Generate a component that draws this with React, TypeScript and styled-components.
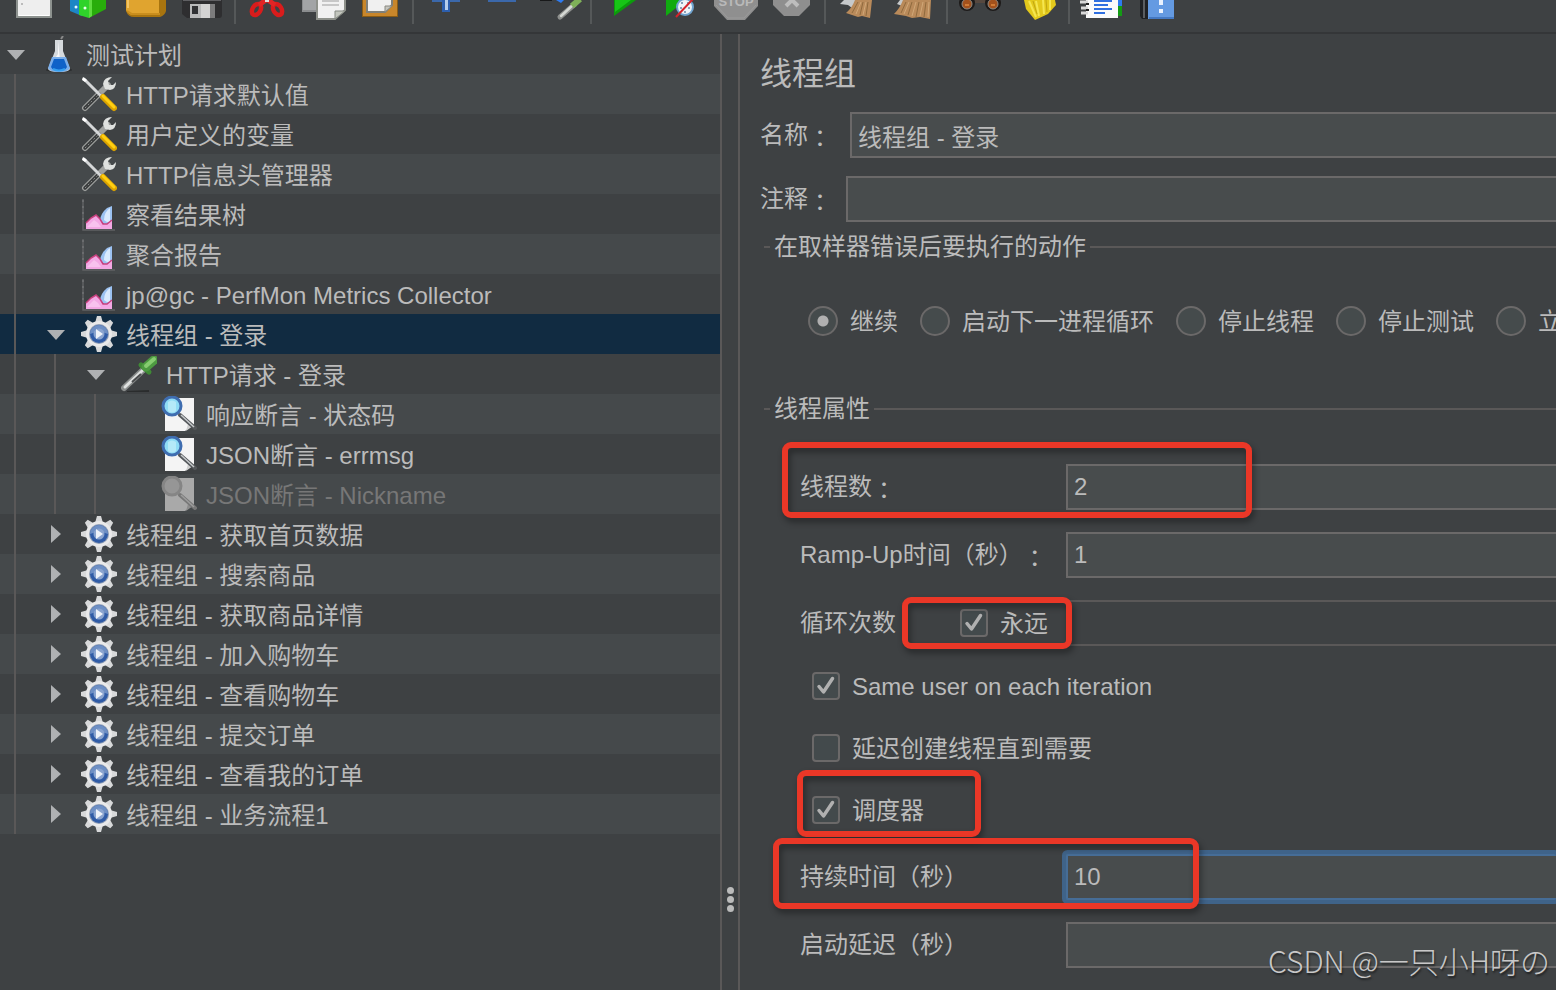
import React, { useId, useState } from "react";
import styled, { createGlobalStyle, css } from "styled-components";

const color = {
  base: "#3e4143",
  stripe: "#45494b",
  selected: "#112b41",
  field: "#484c4d",
  border: "#6b6969",
  line: "#5a5858",
  text: "#bbbbbb",
  muted: "#777777",
  focus: "#3f6389",
  mark: "#ea3727",
};

const GlobalStyle = createGlobalStyle`
  *, *::before, *::after { box-sizing: border-box; }
  body {
    margin: 0;
    overflow: hidden;
    background: ${color.base};
    color: ${color.text};
    font: 24px/30px "Liberation Sans", "Noto Sans CJK SC", sans-serif;
    text-spacing-trim: space-all;
  }
  button, input { font: inherit; color: inherit; margin: 0; }
`;

/* ---------- layout ---------- */

const Page = styled.div`
  height: 100vh;
  display: flex;
  flex-direction: column;
  overflow: hidden;
  position: relative;
`;

const Toolbar = styled.div`
  flex: none;
  display: flex;
  align-items: flex-start;
  height: 34px;
  padding-left: 6px;
  border-bottom: 2px solid #343638;
`;

const ToolButton = styled.button`
  flex: none;
  width: 56px;
  height: 24px;
  padding: 0;
  border: 0;
  background: none;
  svg { display: block; }
`;

const ToolSeparator = styled.span`
  flex: none;
  width: 2px;
  height: 24px;
  margin: 0 4px;
  background: #555859;
`;

const Workspace = styled.div`
  flex: 1;
  min-height: 0;
  display: flex;
`;

const TreePane = styled.nav`
  flex: 0 0 720px;
  min-width: 0;
`;

const Splitter = styled.div`
  flex: 0 0 20px;
  display: flex;
  flex-direction: column;
  align-items: center;
  justify-content: flex-end;
  gap: 2px;
  padding-bottom: 78px;
  border: solid ${color.line};
  border-width: 0 2px;
`;

const Dot = styled.span`
  width: 7px;
  height: 7px;
  border-radius: 50%;
  background: ${color.text};
`;

/* ---------- tree ---------- */

const TreeList = styled.ul`
  list-style: none;
  margin: 0;
  padding: 0;
`;

const TreeRow = styled.li<{ $selected?: boolean; $disabled?: boolean }>`
  display: flex;
  align-items: center;
  height: 40px;
  white-space: nowrap;
  &:nth-child(even) { background: ${color.stripe}; }
  ${(p) => p.$selected && css`&&:nth-child(n) { background: ${color.selected}; }`}
  ${(p) => p.$disabled && css`color: ${color.muted};`}
`;

const Indent = styled.span`
  flex: none;
  align-self: stretch;
  width: 40px;
  background: linear-gradient(${color.line}, ${color.line}) 14px 0 / 2px 100% no-repeat;
`;

const Toggle = styled.button`
  flex: none;
  display: grid;
  place-items: center;
  width: 32px;
  height: 40px;
  padding: 0;
  border: 0;
  background: none;
`;

const ToggleSpace = styled.span`
  flex: none;
  width: 32px;
`;

const TreeIcon = styled.svg`
  flex: none;
  width: 36px;
  height: 36px;
  margin: 0 9px;
`;

const TreeLabel = styled.span`
  padding-top: 3px;
`;

/* ---------- form ---------- */

const FormPane = styled.main`
  flex: 1;
  min-width: 0;
  overflow: hidden;
  padding: 20px 0 0 20px;
`;

const Title = styled.h1`
  margin: 0 0 18px;
  font-size: 32px;
  line-height: 40px;
  font-weight: 400;
`;

const HeadRow = styled.div<{ $gap: number }>`
  display: flex;
  align-items: center;
  gap: ${(p) => p.$gap}px;
  & + & { margin-top: 18px; }
`;

const Colon = styled.span`
  font-family: "Noto Sans CJK TC", sans-serif;
  line-height: 1;
  vertical-align: -4px;
`;

const TextField = styled.input<{ $active?: boolean }>`
  flex: 1;
  min-width: 0;
  height: 46px;
  padding: 0 6px;
  border: 2px solid ${color.border};
  border-right: 0;
  border-radius: 0;
  outline: 0;
  background: ${color.field};
  &:disabled { border-color: ${color.line}; background: ${color.base}; }
  ${(p) =>
    p.$active &&
    css`
      border-color: #466d97;
      border-radius: 2px;
      box-shadow: 0 0 0 4px ${color.focus};
    `}
`;

const Group = styled.section`
  margin-top: 10px;
  & + & { margin-top: 58px; }
`;

const GroupTitle = styled.h2`
  display: flex;
  align-items: center;
  gap: 4px;
  margin: 0 0 0 4px;
  font-size: 24px;
  line-height: 30px;
  font-weight: 400;
  white-space: nowrap;
  &::before { content: ""; width: 6px; height: 2px; background: ${color.line}; }
  &::after { content: ""; flex: 1; height: 2px; background: ${color.line}; }
`;

const RadioRow = styled.div`
  display: flex;
  gap: 22px;
  margin-top: 44px;
  padding-left: 48px;
`;

const Choice = styled.label`
  flex: none;
  display: flex;
  align-items: center;
  gap: 12px;
  height: 30px;
  white-space: nowrap;
`;

const Caption = styled.span`
  padding-top: 2px;
`;

const Radio = styled.input`
  appearance: none;
  width: 30px;
  height: 30px;
  border: 2px solid ${color.border};
  border-radius: 50%;
  background: #454b4c;
  &:checked { background: radial-gradient(circle, #b0b0b0 0 5px, #454b4c 6px); }
`;

const Tick = styled.span`
  display: grid;
  width: 28px;
  height: 28px;
  & > * { grid-area: 1 / 1; }
  svg { pointer-events: none; }
`;

const TickInput = styled.input`
  appearance: none;
  width: 28px;
  height: 28px;
  border: 2px solid ${color.border};
  border-radius: 4px;
  background: #434a4c;
`;

const Fields = styled.div<{ $first?: boolean }>`
  display: flex;
  flex-direction: column;
  gap: 22px;
  padding: ${(p) => (p.$first ? "40px 0 0 40px" : "13px 0 0 40px")};
`;

const FieldRow = styled.div`
  position: relative;
  display: flex;
  align-items: center;
`;

const LabelCell = styled.div`
  flex: 0 0 266px;
  display: flex;
  justify-content: space-between;
  padding-right: 18px;
  white-space: nowrap;
`;

const Ticks = styled.div`
  padding: 9px 0 0 52px;
`;

const TickRow = styled.div`
  position: relative;
  display: flex;
  align-items: center;
  height: 62px;
`;

/* Red annotation frame lying over a row. */
const Marker = styled.span<{ $x: number; $y: number; $w: number; $h: number }>`
  position: absolute;
  z-index: 1;
  left: ${(p) => p.$x}px;
  top: ${(p) => p.$y}px;
  width: ${(p) => p.$w}px;
  height: ${(p) => p.$h}px;
  border: 6px solid ${color.mark};
  border-radius: 9px;
  filter: drop-shadow(2px 4px 3px rgba(0, 0, 0, 0.4));
  pointer-events: none;
`;

const Watermark = styled.div`
  position: absolute;
  right: 6px;
  bottom: 10px;
  font: 300 30px/40px "Noto Sans CJK SC", sans-serif;
  color: #c8c8c8;
  text-shadow: 1px 2px 2px rgba(0, 0, 0, 0.5);
  pointer-events: none;
`;

/* ---------- toolbar drawings ---------- */

const toolArt: Record<string, React.ReactNode> = {
  新建: (
    <>
      <rect x="11" y="-6" width="34" height="23" fill="#eeeeee" stroke="#8d928f" strokeWidth="2" />
      <path d="M13 15.5h30" stroke="#fff" />
      <path d="M15 3h2v2h-2z" fill="#bbb" />
    </>
  ),
  模板: (
    <>
      <path d="M8 0H20V16L8 11Z" fill="#1d86c6" />
      <path d="M17 0H27V18L17 15Z" fill="#2fd32a" />
      <path d="M27 0H44V9L27 18Z" fill="#28ad0b" />
      <path d="M27 0H30V16L27 18Z" fill="#5fdc40" />
      <circle cx="14" cy="7" r="1.5" fill="#e8f4ff" />
      <circle cx="23" cy="8" r="1.5" fill="#e8ffe8" />
    </>
  ),
  打开: (
    <>
      <path d="M8 0V11Q10 17 16 17H42Q47 15 48 11V0Z" fill="#a8740f" />
      <path d="M8 0V10Q11 15 15 15H41V0Z" fill="#e0a42f" />
      <path d="M9 11L14 14H42" stroke="#c98e1e" strokeWidth="2" fill="none" />
      <path d="M10 0V8" stroke="#f3c565" strokeWidth="2" />
    </>
  ),
  保存: (
    <>
      <path d="M8 0H48V15Q48 18 45 18H13L8 14Z" fill="#2e2e30" />
      <path d="M9 0H47V1H9Z" fill="#606063" />
      <rect x="16" y="4" width="25" height="14" fill="#b9babb" />
      <rect x="27" y="4" width="9" height="14" fill="#d3d3d3" />
      <rect x="36" y="4" width="5" height="14" fill="#7c7c7d" />
      <rect x="18" y="6" width="6" height="8" fill="#303134" />
    </>
  ),
  剪切: (
    <>
      <ellipse cx="16.5" cy="9.5" rx="4" ry="6" transform="rotate(32 16.5 9.5)" fill="none" stroke="#d91c1c" strokeWidth="4.5" />
      <ellipse cx="37.5" cy="9.5" rx="4" ry="6" transform="rotate(-32 37.5 9.5)" fill="none" stroke="#d91c1c" strokeWidth="4.5" />
      <path d="M19 5L26 0M35 5L28 0" stroke="#e02525" strokeWidth="5" />
      <path d="M25 0h4v2h-4z" fill="#ddd" />
    </>
  ),
  复制: (
    <>
      <path d="M6 0H26V12H6Z" fill="#8b8d8f" />
      <path d="M7 0H25V10H7Z" fill="#a2a4a6" />
      <path d="M21 -4V19H39L49 10V-4Z" fill="#f1f1f1" stroke="#8e918b" strokeWidth="2" />
      <path d="M39 19V11H49Z" fill="#c3c6be" stroke="#858982" />
      <path d="M26 1H43M26 5H43" stroke="#b9b9b9" strokeWidth="1.5" />
    </>
  ),
  粘贴: (
    <>
      <path d="M10 0H46V17H10Z" fill="#8a5c15" />
      <path d="M11 0H45V16H11Z" fill="#c8862b" />
      <path d="M15 -2H40V5L33 12H15Z" fill="#f0f0f0" stroke="#7f7f78" strokeWidth="2" />
      <path d="M33 12V6H40Z" fill="#c5c5be" stroke="#8a8a82" />
    </>
  ),
  添加: (
    <>
      <path d="M14 0H42V2H14Z" fill="#3b68ab" />
      <path d="M24 0H32V12H24Z" fill="#2d5fae" />
      <path d="M27 0H30V10H27Z" fill="#b6cdec" />
    </>
  ),
  移除: <path d="M14 0H42V2H14Z" fill="#3b68ab" />,
  切换: (
    <>
      <path d="M10 0H22V1H10Z" fill="#18191a" />
      <path d="M26 0H34L31 3Z" fill="#2e7bf0" />
      <path d="M30 17L45 4" stroke="#8d8f8d" strokeWidth="5" strokeLinecap="round" />
      <path d="M31 16L44 4" stroke="#d5d8d4" strokeWidth="2.5" strokeLinecap="round" />
      <path d="M42 6L50 -1" stroke="#7fb159" strokeWidth="6" />
    </>
  ),
  启动: (
    <>
      <path d="M18 0H40L18 16Z" fill="#0c9b0c" />
      <path d="M19 0H35L19 12Z" fill="#17c516" />
    </>
  ),
  不停顿开始: (
    <>
      <path d="M14 0H34L14 16Z" fill="#10ab10" />
      <circle cx="33" cy="7" r="8" fill="#eef3f8" stroke="#6fa3cf" strokeWidth="2" />
      <path d="M29 3h2M35 3h2M28 8h2M36 8h2M32 12h2" stroke="#8aa0b8" strokeWidth="2" />
      <path d="M24 17L41 -1" stroke="#d5232b" strokeWidth="2" />
    </>
  ),
  停止: (
    <>
      <path d="M6 0V6L19 20H37L50 6V0Z" fill="#8f8f8f" />
      <path d="M8 5L20 18H36L48 5" fill="none" stroke="#9b9b9b" />
      <text x="28" y="6" textAnchor="middle" fontSize="13" fontWeight="700" fill="#b9b9b9">STOP</text>
    </>
  ),
  关闭: (
    <>
      <path d="M9 0V5L20 16H35L46 5V0Z" fill="#8f8f8f" />
      <path d="M22 6L28 0L34 6" fill="none" stroke="#bdbdbd" strokeWidth="4" />
    </>
  ),
  清除: (
    <>
      <path d="M10 4L14 0H26L22 8L18 5Z" fill="#c6c9cb" />
      <path d="M25 0H42L40 18L32 16L28 17L16 13Q22 8 25 0Z" fill="#b98a5a" />
      <path d="M28 2L22 13M33 2L30 15M38 2L36 16" stroke="#8f6a3e" />
      <path d="M31 2L26 14M36 2L33 15" stroke="#d0a878" />
    </>
  ),
  清除全部: (
    <>
      <path d="M11 4L14 0H20L16 6Z" fill="#c6c9cb" />
      <path d="M17 0H45L44 19L34 17L26 18L20 16L8 14Q14 8 17 0Z" fill="#b98a5a" />
      <path d="M20 2L15 13M26 2L22 15M33 2L30 17M40 2L38 17" stroke="#8f6a3e" />
      <path d="M23 2L18 14M30 2L26 16M37 2L34 16M43 2L42 17" stroke="#d0a878" />
    </>
  ),
  查找: (
    <>
      <path d="M18 0H38V3H18Z" fill="#56483f" />
      <circle cx="15" cy="3" r="8" fill="#1d1a19" />
      <circle cx="41" cy="3" r="8" fill="#1d1a19" />
      <circle cx="15" cy="4" r="5" fill="#a3511c" stroke="#8d8984" />
      <circle cx="41" cy="4" r="5" fill="#a3511c" stroke="#8d8984" />
      <path d="M13 5h4M39 5h4" stroke="#d07a35" strokeWidth="2" />
    </>
  ),
  重置搜索: (
    <>
      <path d="M16 0H47L48 5L40 14L27 20L18 9Z" fill="#e3c91c" />
      <path d="M21 1L28 17M28 1L31 16M35 0L36 14M42 0L42 10" stroke="#f5e650" strokeWidth="2" />
      <path d="M25 1L29 14M38 0L39 12" stroke="#c0a612" />
    </>
  ),
  函数助手: (
    <>
      <path d="M44 0H48V6H44Z" fill="#2e7bf0" />
      <path d="M44 6H48V16H44Z" fill="#149c14" />
      <path d="M12 0H44V18H12Z" fill="#fafafa" />
      <path d="M20 1H38M20 9H38" stroke="#2f6fe0" strokeWidth="2" />
      <path d="M20 5H34M20 13H31" stroke="#2f6fe0" strokeWidth="2" />
      <path d="M6 2h8M7 8h7M7 13h7" stroke="#d9d9d9" strokeWidth="3" />
      <path d="M12 3h3v2h-3zM12 9h3v2h-3z" fill="#222" />
    </>
  ),
  帮助: (
    <>
      <path d="M10 0H19V19H12L10 16Z" fill="#1f2124" />
      <path d="M14 0V18" stroke="#5a5d61" strokeWidth="2" />
      <path d="M18 0H44V19H18Z" fill="#649ae2" />
      <path d="M19 18H44" stroke="#4479c4" strokeWidth="2" />
      <path d="M29 0H33V5H29ZM29 9H33V13H29Z" fill="#eaf2ff" />
    </>
  ),
};

const toolGroups = [
  ["新建", "模板", "打开", "保存"],
  ["剪切", "复制", "粘贴"],
  ["添加", "移除", "切换"],
  ["启动", "不停顿开始", "停止", "关闭"],
  ["清除", "清除全部"],
  ["查找", "重置搜索"],
  ["函数助手", "帮助"],
];

/* ---------- tree drawings ---------- */

type IconName = "flask" | "tools" | "chart" | "gear" | "dropper" | "assert" | "assertOff";

const magnifier = (off: boolean) => (
  <>
    <path d="M4 2H33V29L24 35H4Z" fill={off ? "#a9a9a9" : "#f4f4f4"} />
    <path d="M25 35L27 28L33 29Z" fill={off ? "#8c8c8c" : "#cfcfcf"} />
    <path d="M19 19L34 32" stroke={off ? "#777" : "#55585b"} strokeWidth="4" strokeLinecap="round" />
    <path d="M20 19L33 31" stroke={off ? "#9d9d9d" : "#c9ccce"} strokeWidth="1.5" />
    <circle cx="11" cy="10" r="9" fill={off ? "#969696" : "#8fdcf5"} stroke={off ? "#858585" : "#3f6db0"} strokeWidth="3" />
    {!off && <path d="M7 6Q11 3 15 6V15Q11 18 7 15Z" fill="#b4e9f8" />}
  </>
);

const treeArt: Record<IconName, React.ReactNode> = {
  flask: (
    <>
      <ellipse cx="18" cy="34" rx="13" ry="2" fill="#2c2e2f" />
      <path d="M20 3L22 0" stroke="#8a8a8a" strokeWidth="2" />
      <path d="M14 4H22V15L29 33Q28 36 18 36Q8 36 7 33L14 15Z" fill="#d6dadd" />
      <path d="M17 5V18L13 24H19Z" fill="#f8f8f8" />
      <path d="M11 21H25L29 32Q27 36 18 36Q9 36 7 32Z" fill="#7aaeea" />
      <path d="M13 23H23L26 31Q24 35 18 35Q12 35 10 31Z" fill="#0f62c8" />
      <path d="M12 33Q18 36 24 33" stroke="#35a0f0" strokeWidth="2" fill="none" />
    </>
  ),
  tools: (
    <>
      <path d="M4 32L27 9" stroke="#9fa19f" strokeWidth="6" strokeLinecap="round" />
      <path d="M4 32L18 18" stroke="#3a3c3d" strokeWidth="3.5" strokeLinecap="round" />
      <path d="M4 32L18 18" stroke="#8a8c8b" strokeWidth="1" strokeDasharray="2 2" />
      <path d="M31 1L27 5L28 9L32 9L35 6Q35 13 29 14L24 13L22 8Q23 1 31 1Z" fill="#dfe1df" />
      <path d="M3 3L20 20" stroke="#d5d7d8" strokeWidth="3" strokeLinecap="round" />
      <path d="M2 1L6 4L4 6L1 4Z" fill="#fff" />
      <path d="M22 21L33 32" stroke="#dba300" strokeWidth="6" strokeLinecap="round" />
      <path d="M22 20L33 31" stroke="#ffcf12" strokeWidth="3" strokeLinecap="round" />
    </>
  ),
  chart: (
    <>
      <path d="M2 3V34H34" stroke="#606264" strokeWidth="1.5" fill="none" />
      <path d="M1 5h2M1 11h2M1 17h2M1 23h2" stroke="#7c7e80" />
      <path d="M31 10L26 12Q20 17 19 24L24 29H31Z" fill="#9cc2f2" />
      <path d="M29 12Q23 16 23 24L26 26H29Z" fill="#d9eafe" />
      <path d="M5 33V27L10 22L15 19L19 23L22 28L26 28L31 24V33Z" fill="#f3a8e4" />
      <path d="M5 27L10 22L15 19L19 23L22 28L26 28L31 24" stroke="#c8407e" strokeWidth="1.5" fill="none" />
      <path d="M6 31L13 24L17 27L20 31Z" fill="#f8c2ee" />
    </>
  ),
  gear: (
    <>
      <g fill="#d8d9da">
        {[0, 45, 90, 135].map((a) => (
          <path key={a} d="M16 0H20L22 7V29L20 36H16L14 29V7Z" transform={`rotate(${a} 18 18)`} />
        ))}
      </g>
      <circle cx="18" cy="18" r="13" fill="#e9e9ea" />
      <circle cx="18" cy="18" r="10" fill="#8e9db5" />
      <circle cx="18" cy="18" r="9" fill="#2f5ba6" />
      <path d="M9 18A9 9 0 0 1 27 18Q18 14 9 18Z" fill="#6e8fc4" />
      <circle cx="18" cy="18" r="5.5" fill="#8aa4cf" />
      <path d="M15 13L22 18L15 23Z" fill="#eef2f9" />
    </>
  ),
  dropper: (
    <>
      <path d="M6 36L28 35" stroke="#2a2c2d" strokeWidth="2" />
      <path d="M3 32L22 14" stroke="#8b8e8d" strokeWidth="6" strokeLinecap="round" />
      <path d="M4 31L22 14" stroke="#dfe1e0" strokeWidth="3" strokeLinecap="round" />
      <path d="M11 26L20 18" stroke="#4a4c4d" strokeWidth="2" />
      <path d="M20 9L28 16" stroke="#3f8a35" strokeWidth="5" strokeLinecap="round" />
      <path d="M25 11L33 4" stroke="#4d9a41" strokeWidth="9" strokeLinecap="round" />
      <path d="M25 10L33 3" stroke="#86cc70" strokeWidth="4" strokeLinecap="round" />
    </>
  ),
  assert: magnifier(false),
  assertOff: magnifier(true),
};

interface Node {
  level: number;
  icon: IconName;
  text: string;
  arrow?: "open" | "closed";
  state?: "selected" | "disabled";
}

const nodes: Node[] = [
  { level: 0, icon: "flask", text: "测试计划", arrow: "open" },
  { level: 1, icon: "tools", text: "HTTP请求默认值" },
  { level: 1, icon: "tools", text: "用户定义的变量" },
  { level: 1, icon: "tools", text: "HTTP信息头管理器" },
  { level: 1, icon: "chart", text: "察看结果树" },
  { level: 1, icon: "chart", text: "聚合报告" },
  { level: 1, icon: "chart", text: "jp@gc - PerfMon Metrics Collector" },
  { level: 1, icon: "gear", text: "线程组 - 登录", arrow: "open", state: "selected" },
  { level: 2, icon: "dropper", text: "HTTP请求 - 登录", arrow: "open" },
  { level: 3, icon: "assert", text: "响应断言 - 状态码" },
  { level: 3, icon: "assert", text: "JSON断言 - errmsg" },
  { level: 3, icon: "assertOff", text: "JSON断言 - Nickname", state: "disabled" },
  { level: 1, icon: "gear", text: "线程组 - 获取首页数据", arrow: "closed" },
  { level: 1, icon: "gear", text: "线程组 - 搜索商品", arrow: "closed" },
  { level: 1, icon: "gear", text: "线程组 - 获取商品详情", arrow: "closed" },
  { level: 1, icon: "gear", text: "线程组 - 加入购物车", arrow: "closed" },
  { level: 1, icon: "gear", text: "线程组 - 查看购物车", arrow: "closed" },
  { level: 1, icon: "gear", text: "线程组 - 提交订单", arrow: "closed" },
  { level: 1, icon: "gear", text: "线程组 - 查看我的订单", arrow: "closed" },
  { level: 1, icon: "gear", text: "线程组 - 业务流程1", arrow: "closed" },
];

function TreeItem({ node }: { node: Node }) {
  const open = node.arrow === "open";
  return (
    <TreeRow
      role="treeitem"
      aria-level={node.level + 1}
      aria-expanded={node.arrow ? open : undefined}
      aria-selected={node.state === "selected"}
      $selected={node.state === "selected"}
      $disabled={node.state === "disabled"}
    >
      {Array.from({ length: node.level }, (_, i) => <Indent key={i} />)}
      {node.arrow ? (
        <Toggle aria-label={open ? "折叠" : "展开"}>
          <svg width="18" height="18" viewBox="0 0 18 18" fill="#afb1b3">
            <path d={open ? "M0 5H18L9 15Z" : "M4 0V18L14 9Z"} />
          </svg>
        </Toggle>
      ) : (
        <ToggleSpace />
      )}
      <TreeIcon viewBox="0 0 36 36" aria-hidden>{treeArt[node.icon]}</TreeIcon>
      <TreeLabel>{node.text}</TreeLabel>
    </TreeRow>
  );
}

/* ---------- form parts ---------- */

function CheckBox({ label, initial }: { label: string; initial: boolean }) {
  const [on, setOn] = useState(initial);
  return (
    <Choice>
      <Tick>
        <TickInput type="checkbox" checked={on} onChange={() => setOn(!on)} />
        {on && (
          <svg width="28" height="28" viewBox="0 0 28 28" aria-hidden>
            <path d="M7 14.5L11.500 20L20.500 6.500" fill="none" stroke="#b0b0b0" strokeWidth="3.5" strokeLinecap="round" strokeLinejoin="round" />
          </svg>
        )}
      </Tick>
      <Caption>{label}</Caption>
    </Choice>
  );
}

interface FieldProps {
  label: string;
  colon?: boolean;
  value: string;
  active?: boolean;
  children?: React.ReactNode;
}

function Field({ label, colon, value, active, children }: FieldProps) {
  const id = useId();
  return (
    <FieldRow>
      <LabelCell>
        <label htmlFor={id}>
          {label}
          {colon && <Colon>：</Colon>}
        </label>
      </LabelCell>
      <TextField id={id} defaultValue={value} $active={active} />
      {children}
    </FieldRow>
  );
}

const errorActions = ["继续", "启动下一进程循环", "停止线程", "停止测试", "立即停止测试"];

export default function App() {
  const [action, setAction] = useState(errorActions[0]);
  return (
    <Page>
      <GlobalStyle />
      <Toolbar role="toolbar">
        {toolGroups.map((group, i) => (
          <React.Fragment key={i}>
            {i > 0 && <ToolSeparator />}
            {group.map((name) => (
              <ToolButton key={name} aria-label={name}>
                <svg width="56" height="24" viewBox="0 0 56 24" aria-hidden>{toolArt[name]}</svg>
              </ToolButton>
            ))}
          </React.Fragment>
        ))}
      </Toolbar>
      <Workspace>
        <TreePane>
          <TreeList role="tree">
            {nodes.map((n) => <TreeItem key={n.text} node={n} />)}
          </TreeList>
        </TreePane>
        <Splitter role="separator">
          <Dot />
          <Dot />
          <Dot />
        </Splitter>
        <FormPane>
          <Title>线程组</Title>
          <HeadRow $gap={18}>
            <label htmlFor="name">名称<Colon>：</Colon></label>
            <TextField id="name" defaultValue="线程组 - 登录" />
          </HeadRow>
          <HeadRow $gap={14}>
            <label htmlFor="comment">注释<Colon>：</Colon></label>
            <TextField id="comment" />
          </HeadRow>
          <Group>
            <GroupTitle>在取样器错误后要执行的动作</GroupTitle>
            <RadioRow role="radiogroup">
              {errorActions.map((a) => (
                <Choice key={a}>
                  <Radio type="radio" name="action" checked={a === action} onChange={() => setAction(a)} />
                  <Caption>{a}</Caption>
                </Choice>
              ))}
            </RadioRow>
          </Group>
          <Group>
            <GroupTitle>线程属性</GroupTitle>
            <Fields $first>
              <Field label="线程数" colon value="2">
                <Marker $x={-18} $y={-22} $w={470} $h={76} />
              </Field>
              <Field label="Ramp-Up时间（秒）" colon value="1" />
              <FieldRow>
                <LabelCell>
                  <label htmlFor="loops">循环次数</label>
                  <CheckBox label="永远" initial />
                </LabelCell>
                <TextField id="loops" disabled />
                <Marker $x={102} $y={-3} $w={170} $h={52} />
              </FieldRow>
            </Fields>
            <Ticks>
              <TickRow><CheckBox label="Same user on each iteration" initial /></TickRow>
              <TickRow><CheckBox label="延迟创建线程直到需要" initial={false} /></TickRow>
              <TickRow>
                <CheckBox label="调度器" initial />
                <Marker $x={-15} $y={-9} $w={184} $h={67} />
              </TickRow>
            </Ticks>
            <Fields>
              <Field label="持续时间（秒）" value="10" active>
                <Marker $x={-27} $y={-16} $w={426} $h={71} />
              </Field>
              <Field label="启动延迟（秒）" value="" />
            </Fields>
          </Group>
        </FormPane>
      </Workspace>
      <Watermark>CSDN @一只小H呀の</Watermark>
    </Page>
  );
}
